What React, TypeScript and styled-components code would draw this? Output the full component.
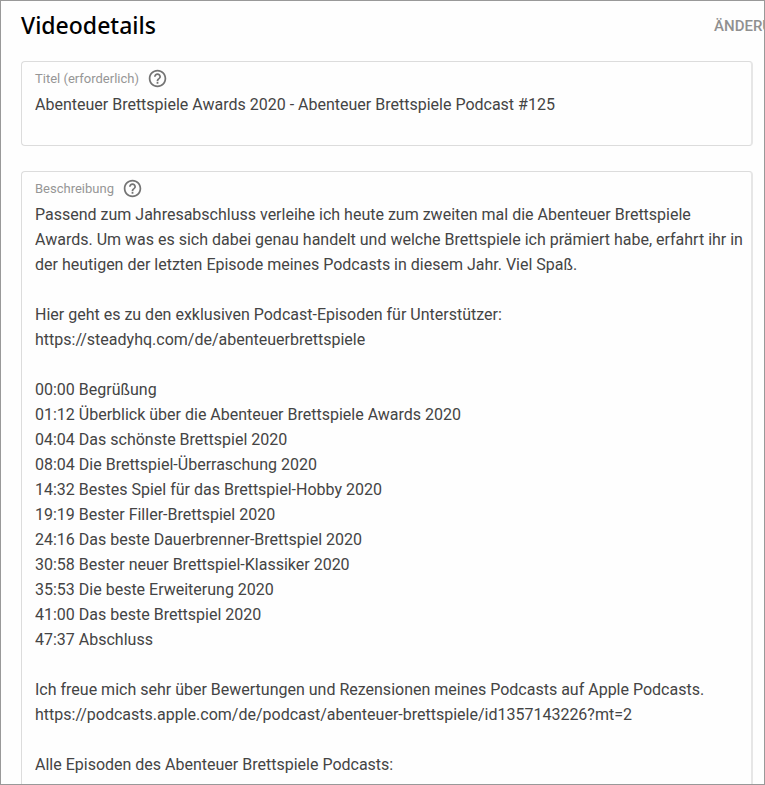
import React, { useId, useState } from "react";
import styled, { createGlobalStyle } from "styled-components";

const GlobalStyle = createGlobalStyle`
  *, *::before, *::after { box-sizing: border-box; }
  body {
    margin: 0;
    background: #fff;
    font-family: Roboto, "Liberation Sans", sans-serif;
  }
`;

const Page = styled.main`
  height: 100vh;
  overflow: hidden;
  padding: 8px 11px 0 20px;
  border: 1px solid #999;
  background: #fefefe;
`;

const Header = styled.header`
  display: flex;
  align-items: flex-end;
  justify-content: space-between;
  min-width: 881px;
  height: 32px;
  margin-bottom: 20px;
`;

const Heading = styled.h1`
  margin: 0;
  color: #000;
  font: 500 23px/32px "Noto Sans", "Open Sans", sans-serif;
`;

const TextButton = styled.button`
  padding: 0;
  border: 0;
  background: none;
  color: #909090;
  font: 500 15px/30px Roboto, sans-serif;
  text-transform: uppercase;
  white-space: nowrap;
  cursor: pointer;
`;

const Form = styled.form`
  display: flex;
  flex-direction: column;
  gap: 25px;
`;

const Field = styled.div`
  display: flex;
  flex-direction: column;
  padding: 3px 6px 3px 13px;
  border: 1px solid #dcdcdc;
  border-right: 2px solid #e6e6e6;
  border-radius: 4px;
`;

const FieldHead = styled.div`
  display: flex;
  align-items: center;
  gap: 8px;
  height: 27px;
`;

const Label = styled.label`
  color: #969696;
  font-size: 13px;
  line-height: 24px;
`;

const HelpButton = styled.button`
  display: flex;
  padding: 0;
  border: 0;
  background: none;
  color: #747474;
  cursor: pointer;
`;

const TextArea = styled.textarea`
  display: block;
  width: 100%;
  padding: 0;
  border: 0;
  outline: 0;
  resize: none;
  overflow: hidden;
  background: none;
  color: #444;
  font: 400 16px/25px Roboto, sans-serif;
`;

function HelpIcon() {
  return (
    <svg width="21" height="21" viewBox="0 0 24 24" fill="currentColor" aria-hidden="true">
      <path d="M11 18h2v-2h-2v2zm1-16C6.48 2 2 6.48 2 12s4.48 10 10 10 10-4.48 10-10S17.52 2 12 2zm0 18c-4.41 0-8-3.59-8-8s3.59-8 8-8 8 3.59 8 8-3.59 8-8 8zm0-14c-2.21 0-4 1.79-4 4h2c0-1.1.9-2 2-2s2 .9 2 2c0 2-3 1.75-3 5h2c0-2.25 3-2.5 3-5 0-2.21-1.79-4-4-4z" />
    </svg>
  );
}

const TITLE = "Abenteuer Brettspiele Awards 2020 - Abenteuer Brettspiele Podcast #125";

const DESCRIPTION = `Passend zum Jahresabschluss verleihe ich heute zum zweiten mal die Abenteuer Brettspiele Awards. Um was es sich dabei genau handelt und welche Brettspiele ich prämiert habe, erfahrt ihr in der heutigen der letzten Episode meines Podcasts in diesem Jahr. Viel Spaß.

Hier geht es zu den exklusiven Podcast-Episoden für Unterstützer:
https://steadyhq.com/de/abenteuerbrettspiele

00:00 Begrüßung
01:12 Überblick über die Abenteuer Brettspiele Awards 2020
04:04 Das schönste Brettspiel 2020
08:04 Die Brettspiel-Überraschung 2020
14:32 Bestes Spiel für das Brettspiel-Hobby 2020
19:19 Bester Filler-Brettspiel 2020
24:16 Das beste Dauerbrenner-Brettspiel 2020
30:58 Bester neuer Brettspiel-Klassiker 2020
35:53 Die beste Erweiterung 2020
41:00 Das beste Brettspiel 2020
47:37 Abschluss

Ich freue mich sehr über Bewertungen und Rezensionen meines Podcasts auf Apple Podcasts.
https://podcasts.apple.com/de/podcast/abenteuer-brettspiele/id1357143226?mt=2

Alle Episoden des Abenteuer Brettspiele Podcasts:`;

interface TextFieldProps {
  label: string;
  initial: string;
  rows: number;
}

function TextField({ label, initial, rows }: TextFieldProps) {
  const id = useId();
  const [value, setValue] = useState(initial);
  return (
    <Field>
      <FieldHead>
        <Label htmlFor={id}>{label}</Label>
        <HelpButton type="button" aria-label={`Hilfe: ${label}`}>
          <HelpIcon />
        </HelpButton>
      </FieldHead>
      <TextArea
        id={id}
        rows={rows}
        value={value}
        spellCheck={false}
        onChange={(e) => setValue(e.target.value)}
      />
    </Field>
  );
}

export default function App() {
  return (
    <>
      <GlobalStyle />
      <Page>
        <Header>
          <Heading>Videodetails</Heading>
          <TextButton type="button">Änderungen verwerfen</TextButton>
        </Header>
        <Form>
          <TextField label="Titel (erforderlich)" initial={TITLE} rows={2} />
          <TextField label="Beschreibung" initial={DESCRIPTION} rows={25} />
        </Form>
      </Page>
    </>
  );
}
